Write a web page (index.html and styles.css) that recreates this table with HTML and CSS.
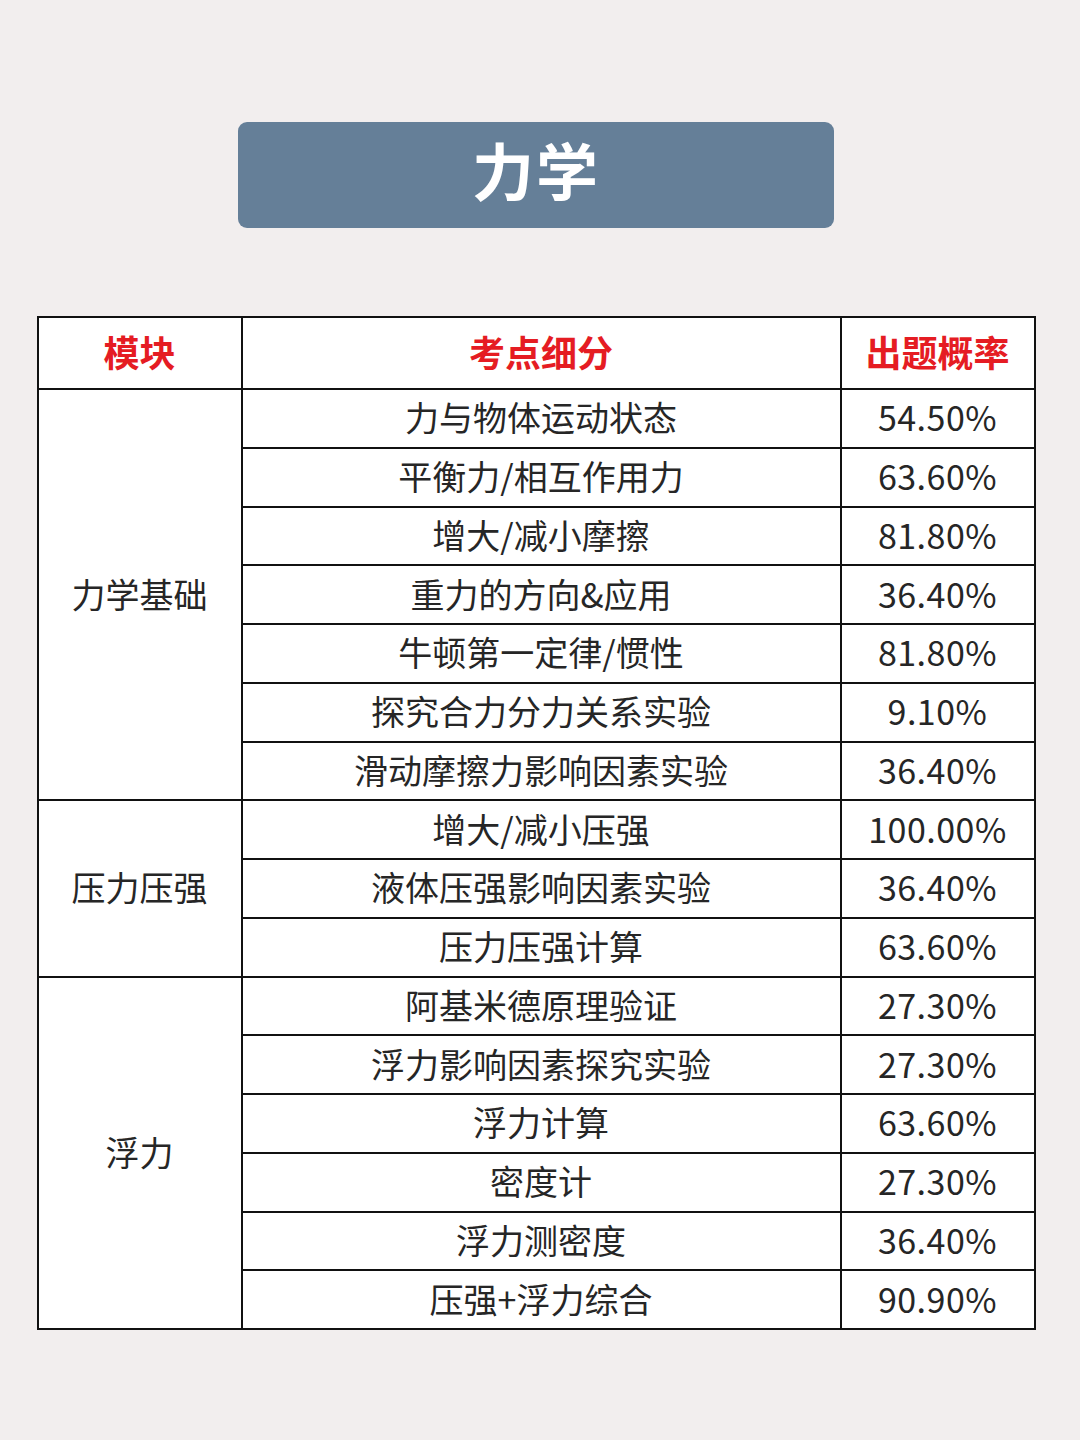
FILE: index.html
```html
<!DOCTYPE html>
<html lang="zh">
<head>
<meta charset="utf-8">
<link rel="stylesheet" href="styles.css">
</head>
<body>
<div class="page">
  <div class="title">力学</div>
  <table class="grid">
    <colgroup>
      <col class="c1"><col class="c2"><col class="c3">
    </colgroup>
    <thead>
      <tr class="head"><th>模块</th><th>考点细分</th><th>出题概率</th></tr>
    </thead>
    <tbody>
      <tr><td rowspan="7" class="mod">力学基础</td><td>力与物体运动状态</td><td class="num">54.50%</td></tr>
      <tr><td>平衡力/相互作用力</td><td class="num">63.60%</td></tr>
      <tr><td>增大/减小摩擦</td><td class="num">81.80%</td></tr>
      <tr><td>重力的方向&amp;应用</td><td class="num">36.40%</td></tr>
      <tr><td>牛顿第一定律/惯性</td><td class="num">81.80%</td></tr>
      <tr><td>探究合力分力关系实验</td><td class="num">9.10%</td></tr>
      <tr><td>滑动摩擦力影响因素实验</td><td class="num">36.40%</td></tr>
      <tr><td rowspan="3" class="mod">压力压强</td><td>增大/减小压强</td><td class="num">100.00%</td></tr>
      <tr><td>液体压强影响因素实验</td><td class="num">36.40%</td></tr>
      <tr><td>压力压强计算</td><td class="num">63.60%</td></tr>
      <tr><td rowspan="6" class="mod">浮力</td><td>阿基米德原理验证</td><td class="num">27.30%</td></tr>
      <tr><td>浮力影响因素探究实验</td><td class="num">27.30%</td></tr>
      <tr><td>浮力计算</td><td class="num">63.60%</td></tr>
      <tr><td>密度计</td><td class="num">27.30%</td></tr>
      <tr><td>浮力测密度</td><td class="num">36.40%</td></tr>
      <tr><td>压强+浮力综合</td><td class="num">90.90%</td></tr>
    </tbody>
  </table>
</div>
</body>
</html>
```
FILE: styles.css
```css
html, body {
  margin: 0;
  padding: 0;
  background: #f2eeee;
}
body {
  width: 1080px;
  height: 1440px;
  font-family: "Noto Sans CJK SC", "Noto Sans", sans-serif;
}
.page {
  display: flex;
  flex-direction: column;
  align-items: center;
  padding-top: 122px;
}
.title {
  width: 596px;
  height: 106px;
  margin-right: 8px;
  background: #657f98;
  border-radius: 9px;
  color: #ffffff;
  font-size: 62px;
  font-weight: 700;
  display: flex;
  align-items: center;
  justify-content: center;
  letter-spacing: 2px;
  padding-bottom: 12px;
  box-sizing: border-box;
}
.grid {
  margin-top: 88px;
  margin-right: 8px;
  border-collapse: collapse;
  background: #ffffff;
  table-layout: fixed;
  width: 997px;
  border: 2px solid #111;
}
.c1 { width: 204px; }
.c2 { width: 599px; }
.c3 { width: 194px; }
.grid th, .grid td {
  border: 2px solid #111;
  text-align: center;
  vertical-align: middle;
  padding: 0 0 3px 0;
  color: #262626;
  font-size: 34px;
  font-weight: 400;
}
.grid tr { height: 58.75px; }
.grid tr.head { height: 72px; }
.grid th {
  color: #e51c23;
  font-size: 36px;
  font-weight: 700;
  padding-bottom: 5px;
}
.grid td.num {
  font-size: 34px;
  letter-spacing: 0.5px;
}
```
